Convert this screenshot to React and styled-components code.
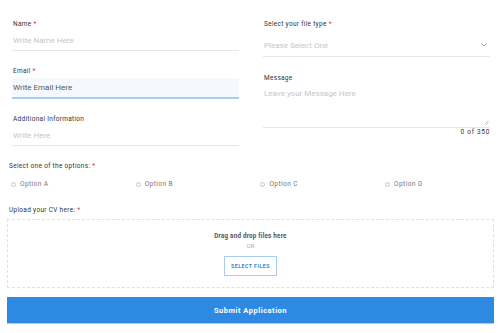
import styled, { createGlobalStyle } from "styled-components";

const Global = createGlobalStyle`
  body {
    margin: 0;
    background: #fff;
    font-family: Roboto, "Liberation Sans", sans-serif;
  }
  * { box-sizing: border-box; }
`;

const Page = styled.form`
  width: 500px;
  padding: 5px 6px 0 7px;
`;

const Columns = styled.div`
  display: grid;
  grid-template-columns: 227px 227px;
  column-gap: 24px;
  padding: 14px 0 0 5px;
`;

const Column = styled.div`
  display: flex;
  flex-direction: column;
  gap: ${(p) => p.$gap || "15px"};
`;

const Field = styled.div`
  display: flex;
  flex-direction: column;
`;

const Label = styled.label`
  display: block;
  font-size: 6.5px;
  line-height: 10px;
  height: 10px;
  font-weight: 400;
  color: #333;
  letter-spacing: 0.3px;
  margin: ${(p) => p.$margin || "0 0 2px 1px"};
`;

const Star = styled.span`
  color: #e53935;
  margin-left: 2px;
`;

const Input = styled.div`
  height: ${(p) => (p.$focus ? "21px" : "20px")};
  padding: 0 1px;
  display: flex;
  align-items: center;
  font-size: 8px;
  color: ${(p) => (p.$focus ? "#555" : "#c6c6c6")};
  background: ${(p) => (p.$focus ? "#f5f9fd" : "transparent")};
  border-bottom: ${(p) => (p.$focus ? "2px solid #a9cdf2" : "1px solid #e6e6e6")};
`;

const Select = styled.div`
  height: 26px;
  padding: 3px 3px 0 1px;
  display: flex;
  align-items: center;
  justify-content: space-between;
  font-size: 8px;
  color: #c6c6c6;
  border-bottom: 1px solid #e6e6e6;
`;

const TextArea = styled.div`
  position: relative;
  height: 43px;
  padding: 4px 1px 0;
  font-size: 8px;
  line-height: 10px;
  color: #c6c6c6;
  border-bottom: 1px solid #e6e6e6;
`;

const Grip = styled.svg`
  position: absolute;
  right: 1px;
  bottom: 2px;
`;

const Counter = styled.div`
  text-align: right;
  font-size: 6.5px;
  line-height: 7px;
  font-weight: 400;
  color: #333;
  letter-spacing: 0.7px;
  margin-top: 1px;
`;

const Section = styled.div`
  margin-top: ${(p) => p.$top || "15px"};
`;

const Options = styled.div`
  display: grid;
  grid-template-columns: repeat(4, 124.7px);
  padding-left: 4px;
  margin-top: 7px;
`;

const Option = styled.label`
  display: flex;
  align-items: center;
  gap: 4px;
  font-size: 6.6px;
  letter-spacing: 0.4px;
  color: #777;
  height: 12px;
`;

const Radio = styled.span`
  width: 5px;
  height: 5px;
  border: 1px solid #c4c4c4;
  border-radius: 50%;
`;

const Drop = styled.div`
  margin-top: 4px;
  height: 69px;
  width: 487px;
  border: 1px dashed #e0e0e0;
  display: flex;
  flex-direction: column;
  align-items: center;
  padding-top: 12px;
`;

const DropText = styled.div`
  font-size: 6.3px;
  line-height: 9px;
  font-weight: 700;
  color: #555;
  letter-spacing: 0.2px;
`;

const Or = styled.div`
  font-size: 6px;
  line-height: 9px;
  color: #aaa;
`;

const SelectButton = styled.button`
  margin-top: 6px;
  width: 53px;
  height: 20px;
  padding: 0;
  background: #fff;
  border: 1.5px solid #a7cbf2;
  color: #3a86d8;
  font-family: inherit;
  font-size: 5.2px;
  font-weight: 700;
  letter-spacing: 0.5px;
`;

const Submit = styled.button`
  display: block;
  margin-top: 9px;
  width: 487px;
  height: 27px;
  padding: 0;
  border: none;
  border-bottom: 1px solid #a3cdf5;
  background: #2e89e3;
  color: #fff;
  font-family: inherit;
  font-size: 7.5px;
  font-weight: 700;
  letter-spacing: 0.5px;
`;

const options = ["Option A", "Option B", "Option C", "Option D"];

export default function App() {
  return (
    <>
      <Global />
      <Page>
        <Columns>
          <Column>
            <Field>
              <Label>
                Name<Star>*</Star>
              </Label>
              <Input>Write Name Here</Input>
            </Field>
            <Field>
              <Label>
                Email<Star>*</Star>
              </Label>
              <Input $focus>Write Email Here</Input>
            </Field>
            <Field>
              <Label>Additional Information</Label>
              <Input>Write Here</Input>
            </Field>
          </Column>
          <Column $gap="16px">
            <Field>
              <Label>
                Select your file type<Star>*</Star>
              </Label>
              <Select>
                Please Select One
                <svg width="6" height="4" viewBox="0 0 6 4">
                  <path d="M0.5 0.5 L3 3 L5.5 0.5" fill="none" stroke="#999" strokeWidth="0.9" />
                </svg>
              </Select>
            </Field>
            <Field>
              <Label>Message</Label>
              <TextArea>
                Leave your Message Here
                <Grip width="5" height="5" viewBox="0 0 5 5">
                  <path d="M0.5 4.5 L4.5 0.5 M2.5 4.5 L4.5 2.5" stroke="#aaa" strokeWidth="0.7" />
                </Grip>
              </TextArea>
              <Counter>0 of 350</Counter>
            </Field>
          </Column>
        </Columns>

        <Section $top="15px">
          <Label $margin="0 0 0 2px">
            Select one of the options:<Star>*</Star>
          </Label>
          <Options>
            {options.map((o) => (
              <Option key={o}>
                <Radio />
                {o}
              </Option>
            ))}
          </Options>
        </Section>

        <Section $top="15px">
          <Label $margin="0 0 0 2px">
            Upload your CV here:<Star>*</Star>
          </Label>
          <Drop>
            <DropText>Drag and drop files here</DropText>
            <Or>OR</Or>
            <SelectButton type="button">SELECT FILES</SelectButton>
          </Drop>
        </Section>

        <Submit type="button">Submit Application</Submit>
      </Page>
    </>
  );
}
